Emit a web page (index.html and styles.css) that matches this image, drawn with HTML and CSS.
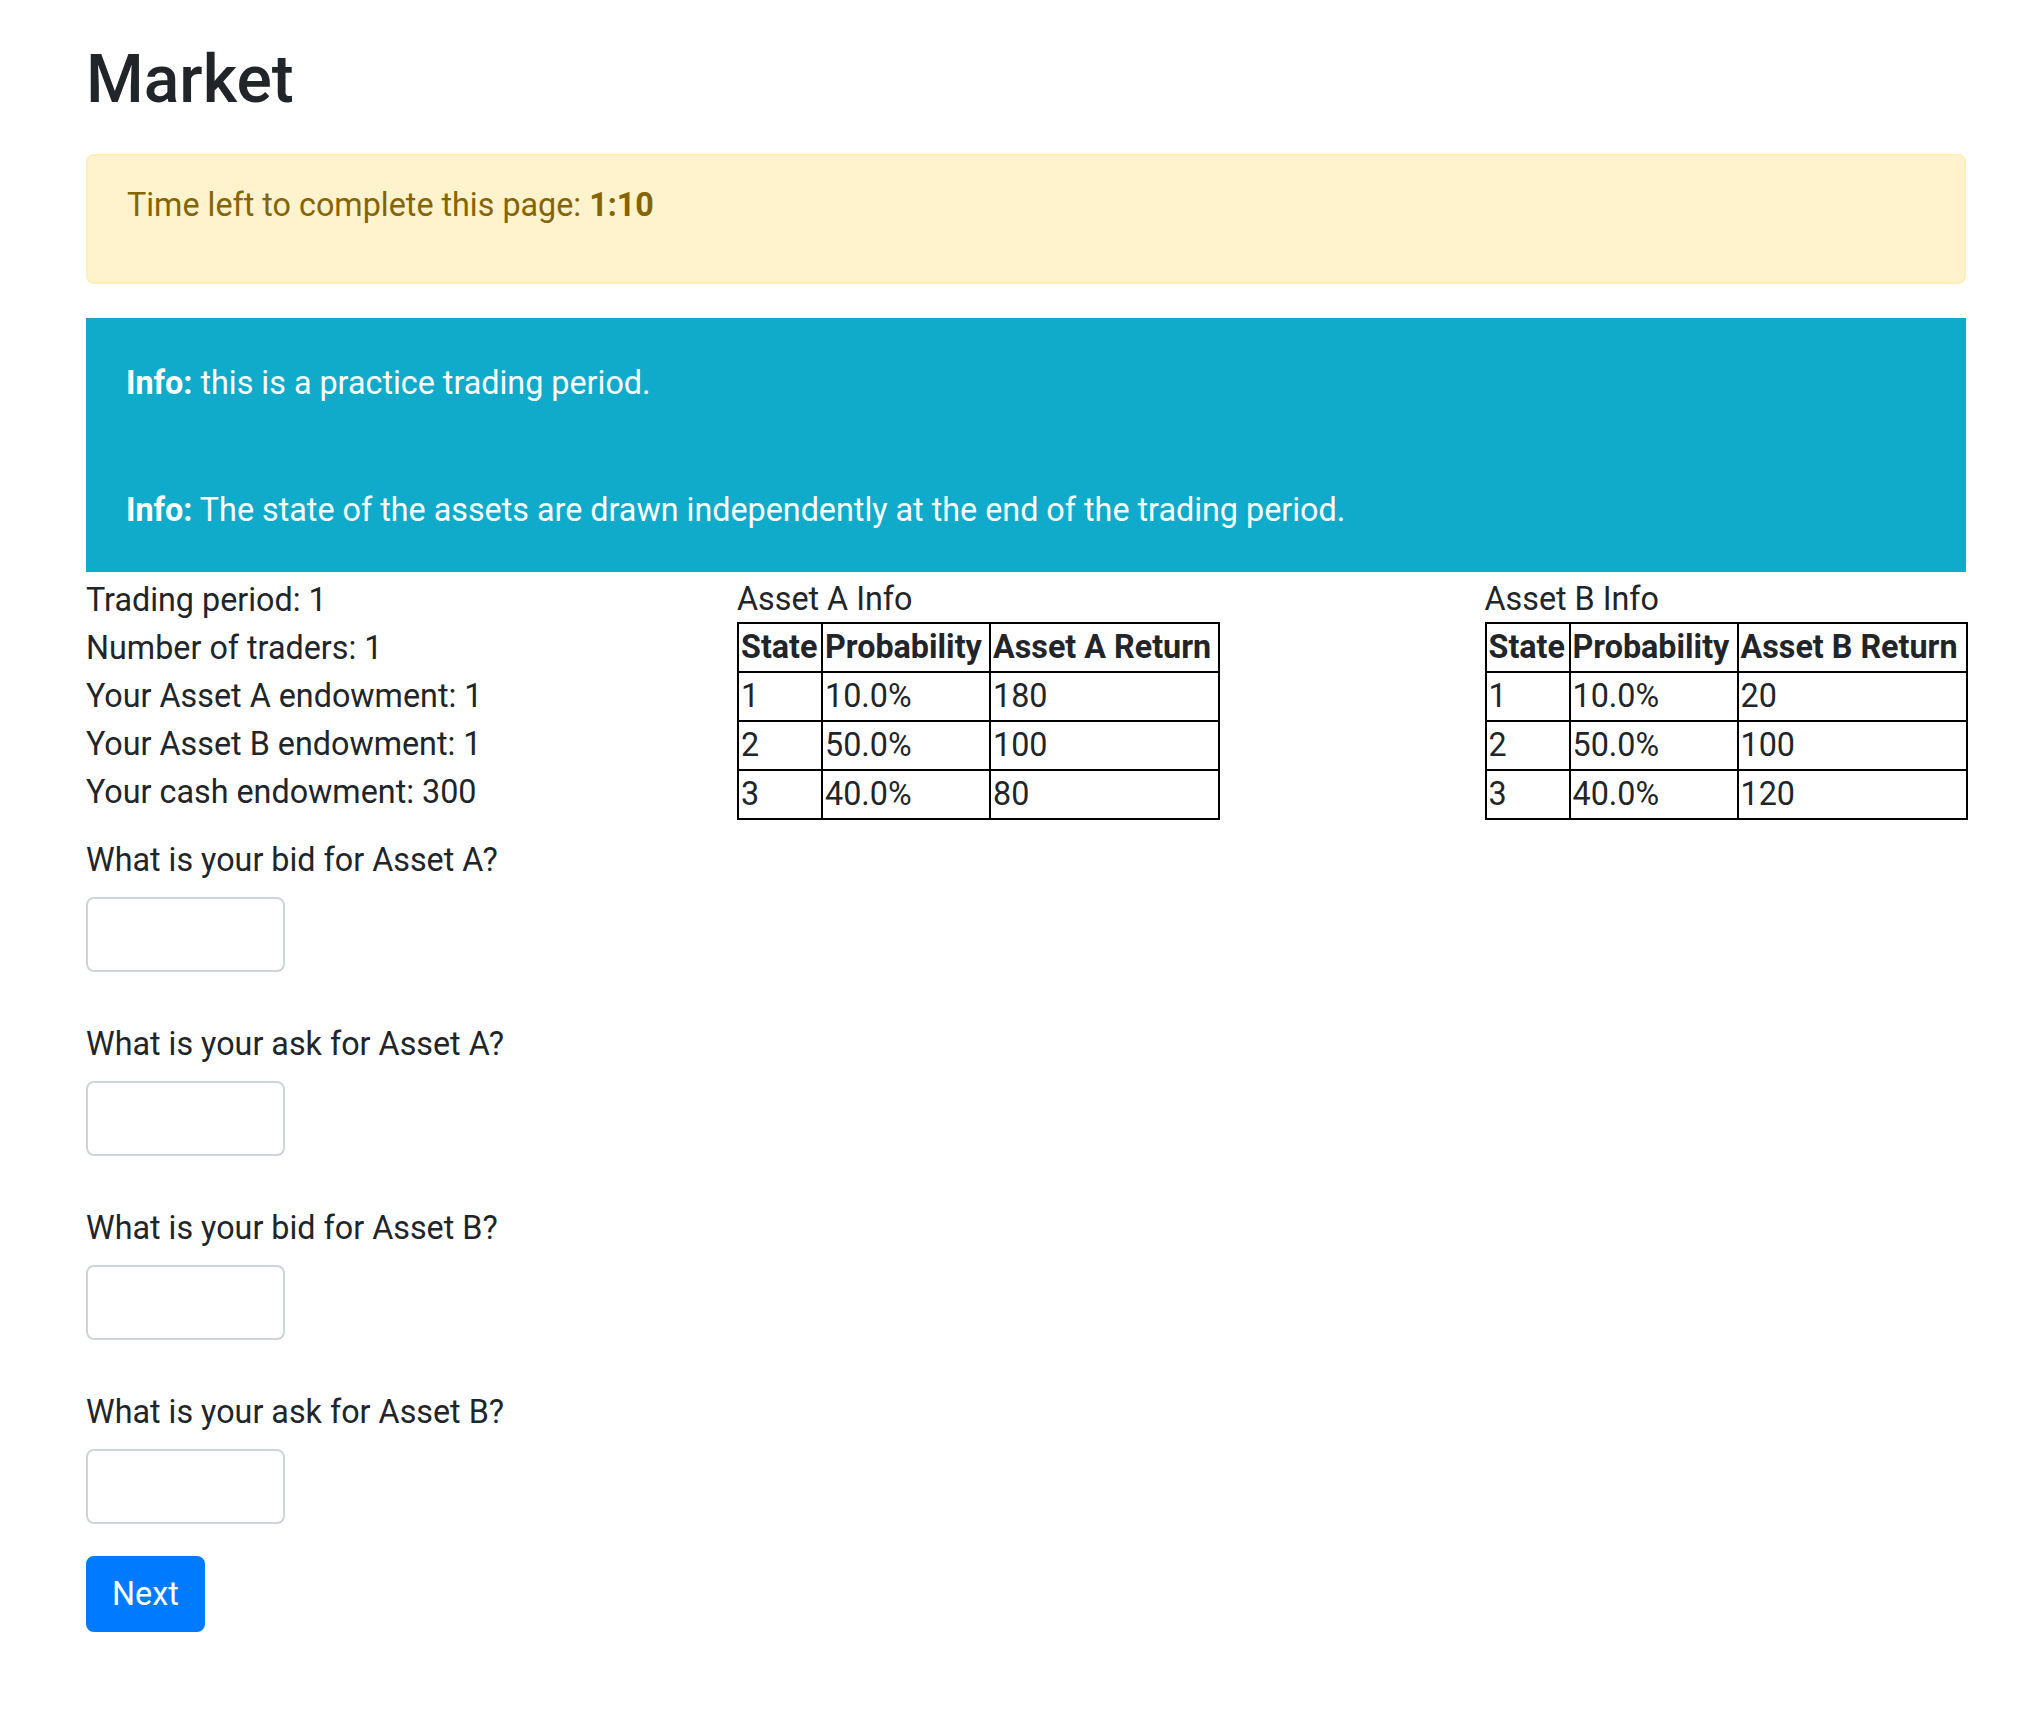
FILE: index.html
```html
<!DOCTYPE html>
<html lang="en">
<head>
<meta charset="utf-8">
<title>Market</title>
<link rel="stylesheet" href="styles.css">
</head>
<body>
<div class="page">
  <h1 class="title">Market</h1>

  <div class="alert-warning">
    <p>Time left to complete this page: <b>1:10</b></p>
  </div>

  <div class="alert-info">
    <p><b>Info:</b> this is a practice trading period.</p>
    <p><b>Info:</b> The state of the assets are drawn independently at the end of the trading period.</p>
  </div>

  <div class="summary">
    <div class="facts">
      <div>Trading period: 1</div>
      <div>Number of traders: 1</div>
      <div>Your Asset A endowment: 1</div>
      <div>Your Asset B endowment: 1</div>
      <div>Your cash endowment: 300</div>
    </div>
    <div class="asset">
      <div class="caption">Asset A Info</div>
      <table class="returns">
        <colgroup><col class="c-state"><col class="c-prob"><col class="c-ret"></colgroup>
        <tr><th>State</th><th>Probability</th><th>Asset A Return</th></tr>
        <tr><td>1</td><td>10.0%</td><td>180</td></tr>
        <tr><td>2</td><td>50.0%</td><td>100</td></tr>
        <tr><td>3</td><td>40.0%</td><td>80</td></tr>
      </table>
    </div>
    <div class="asset">
      <div class="caption">Asset B Info</div>
      <table class="returns">
        <colgroup><col class="c-state"><col class="c-prob"><col class="c-ret"></colgroup>
        <tr><th>State</th><th>Probability</th><th>Asset B Return</th></tr>
        <tr><td>1</td><td>10.0%</td><td>20</td></tr>
        <tr><td>2</td><td>50.0%</td><td>100</td></tr>
        <tr><td>3</td><td>40.0%</td><td>120</td></tr>
      </table>
    </div>
  </div>

  <form class="orders">
    <div class="field">
      <label for="bidA">What is your bid for Asset A?</label>
      <input id="bidA" type="text">
    </div>
    <div class="field">
      <label for="askA">What is your ask for Asset A?</label>
      <input id="askA" type="text">
    </div>
    <div class="field">
      <label for="bidB">What is your bid for Asset B?</label>
      <input id="bidB" type="text">
    </div>
    <div class="field">
      <label for="askB">What is your ask for Asset B?</label>
      <input id="askB" type="text">
    </div>
    <button type="button" class="btn">Next</button>
  </form>
</div>
</body>
</html>
```

FILE: styles.css
```css
html, body {
  margin: 0;
  padding: 0;
  background: #ffffff;
}

body {
  font-family: Roboto, "Liberation Sans", sans-serif;
  font-size: 32.3px;
  line-height: 48px;
  color: #212529;
}

.page {
  width: 1880px;
  padding: 40px 0 60px 86px;
}

.title {
  margin: 0 0 34px 0;
  font-size: 66px;
  line-height: 80px;
  font-weight: 500;
}

.alert-warning {
  background: #fff3cd;
  border: 2px solid #ffeeba;
  border-radius: 8px;
  color: #856404;
  padding: 25px 39px 53px 39px;
  margin-bottom: 34px;
}

.alert-warning p,
.alert-info p {
  margin: 0;
}

.alert-info {
  background: #10abcb;
  color: #ffffff;
  padding: 41px 40px 38px 40px;
  display: flex;
  flex-direction: column;
  gap: 79px;
}

.summary {
  display: grid;
  grid-template-columns: 651px 747.5px 481.5px;
  align-items: start;
  padding-top: 4px;
}

.caption {
  line-height: 46px;
}

.returns {
  border-collapse: collapse;
  table-layout: fixed;
  width: 481px;
}

.returns .c-state { width: 84px; }
.returns .c-prob { width: 168px; }
.returns .c-ret { width: 229px; }

.returns th,
.returns td {
  border: 2px solid #000000;
  padding: 0 2px;
  line-height: 47px;
  text-align: left;
  white-space: nowrap;
  overflow: hidden;
}

.returns th {
  font-weight: 700;
}

.orders {
  display: flex;
  flex-direction: column;
  align-items: flex-start;
  gap: 48px;
  padding-top: 16px;
}

.field {
  display: flex;
  flex-direction: column;
  align-items: flex-start;
  gap: 13px;
}

.field label {
  display: block;
}

.field input {
  box-sizing: border-box;
  width: 199px;
  height: 75px;
  border: 2px solid #ced4da;
  border-radius: 8px;
  background: #ffffff;
  font: inherit;
  padding: 12px 24px;
}

.btn {
  margin-top: -16px;
  box-sizing: border-box;
  height: 76px;
  padding: 12px 24px;
  border: 2px solid #007bff;
  border-radius: 8px;
  background: #007bff;
  color: #ffffff;
  font: inherit;
}
```
